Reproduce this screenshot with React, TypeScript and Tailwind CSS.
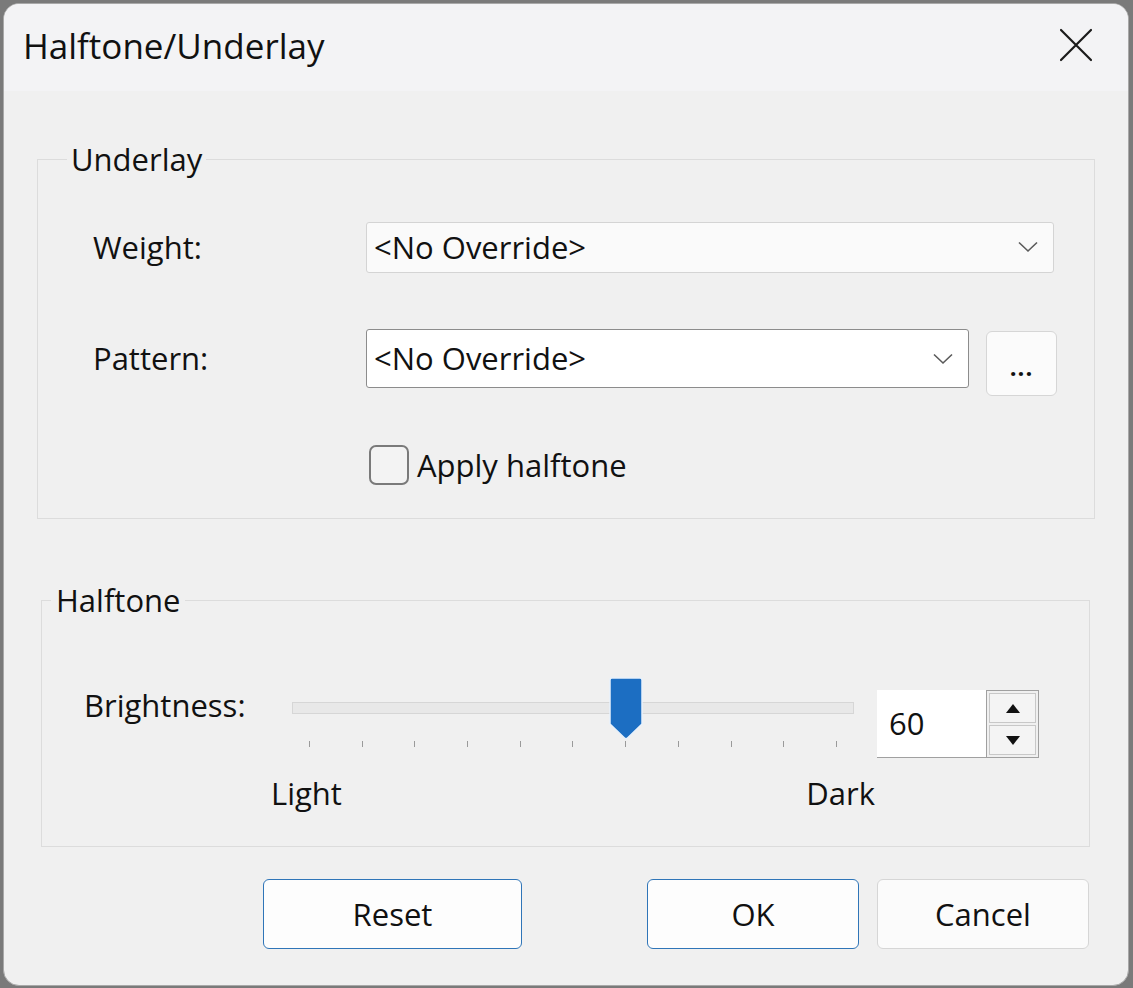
import React from 'react';

const font = { fontFamily: '"Open Sans", "Noto Sans", sans-serif' };

function Chevron() {
    return (
        <svg width="20" height="12" viewBox="0 0 20 12" className="shrink-0">
            <path d="M1 1.5 L10 10 L19 1.5" fill="none" stroke="#5a5a5a" strokeWidth="1.6" />
        </svg>
    );
}

function Combo({ width, height, focused }: { width: number; height: number; focused?: boolean }) {
    return (
        <div
            className={
                focused
                    ? 'flex items-center justify-between pl-[7px] pr-[15px] rounded-[3px] bg-white border border-[#8c8c8c]'
                    : 'flex items-center justify-between pl-[7px] pr-[15px] rounded-[3px] bg-[#fafafa] border border-[#d4d4d4]'
            }
            style={{ width, height }}
        >
            <span className="text-[31px] leading-none text-[#111]">&lt;No Override&gt;</span>
            <Chevron />
        </div>
    );
}

export default function App() {
    const ticks = Array.from({ length: 11 });
    return (
        <div className="w-[1133px] h-[988px] bg-[#7a7a7a] p-[3px] overflow-hidden" style={font}>
            <div className="w-[1126px] h-[983px] rounded-[16px] border border-[#a8a8a8] bg-[#f0f0f0] overflow-hidden flex flex-col text-[#111]">
                {/* title bar */}
                <div className="h-[87px] shrink-0 bg-[#f3f3f5] flex items-center justify-between pl-[19px] pr-[35px]">
                    <span className="text-[35px] leading-none -mt-[4px]">Halftone/Underlay</span>
                    <svg width="34" height="34" viewBox="0 0 34 34" className="-mt-[6px]">
                        <path d="M2 2 L32 32 M32 2 L2 32" stroke="#1a1a1a" strokeWidth="2.2" strokeLinecap="round" />
                    </svg>
                </div>

                {/* Underlay group */}
                <fieldset className="ml-[33px] mt-[50px] w-[1058px] h-[378px] border border-[#dcdcdc] px-0">
                    <legend className="ml-[29px] px-[4px] text-[31px] leading-[36px]">Underlay</legend>
                    <div className="flex items-center mt-[45px] h-[50px]">
                        <span className="w-[328px] pl-[55px] text-[31px]">Weight:</span>
                        <Combo width={688} height={51} />
                    </div>
                    <div className="flex items-start mt-[57px] h-[66px]">
                        <span className="w-[328px] pl-[55px] text-[31px] leading-[58px]">Pattern:</span>
                        <Combo width={603} height={59} focused />
                        <div className="ml-[17px] mt-[2px] w-[71px] h-[65px] rounded-[6px] bg-[#fbfbfb] border border-[#d6d6d6] flex items-end justify-center pb-[16px]">
                            <span className="text-[24px] leading-none font-bold tracking-[1px]">...</span>
                        </div>
                    </div>
                    <div className="flex items-center ml-[331px] mt-[50px] h-[40px]">
                        <div className="w-[40px] h-[40px] rounded-[7px] border-2 border-[#7a7a7a] bg-[#f3f3f3]" />
                        <span className="ml-[8px] text-[31px] leading-none">Apply halftone</span>
                    </div>
                </fieldset>

                {/* Halftone group */}
                <fieldset className="ml-[37px] mt-[63px] w-[1049px] h-[265px] border border-[#dcdcdc] px-0">
                    <legend className="ml-[9px] px-[5px] text-[31px] leading-[36px]">Halftone</legend>
                    <div className="flex items-start mt-[62px]">
                        <span className="w-[250px] pl-[42px] text-[31px] leading-[36px] mt-[7px]">Brightness:</span>
                        <div className="w-[585px] flex flex-col">
                            <div className="relative h-[60px]">
                                <div className="absolute left-0 top-[22px] w-[562px] h-[12px] bg-[#e8e8e8] border border-[#d6d6d6]" />
                                <svg className="absolute left-[316px] -top-[3px]" width="36" height="64" viewBox="0 0 36 64">
                                    <path d="M2 3 Q2 1 4 1 L32 1 Q34 1 34 3 L34 47 L19.5 61 Q18 62.5 16.5 61 L2 47 Z" fill="#1c6ec2" stroke="#e8f1fb" strokeWidth="1.5" />
                                </svg>
                            </div>
                            <div className="flex justify-between w-[528px] ml-[17px] mt-[1px]">
                                {ticks.map((_, i) => (
                                    <div key={i} className="w-px h-[6px] bg-[#9a9a9a]" />
                                ))}
                            </div>
                            <div className="flex justify-between w-[604px] -ml-[21px] mt-[31px] text-[31px] leading-none">
                                <span>Light</span>
                                <span>Dark</span>
                            </div>
                        </div>
                        <div className="flex mt-[10px]">
                            <div className="w-[109px] h-[68px] bg-white border-b border-[#a0a0a0] flex items-center pl-[12px] text-[31px]">60</div>
                            <div className="w-[53px] h-[68px] border border-[#a0a0a0] bg-[#f0f0f0] flex flex-col gap-[2px] p-[2px]">
                                <div className="flex-1 border border-[#c8c8c8] bg-[#f4f4f4] flex items-center justify-center">
                                    <svg width="14" height="9" viewBox="0 0 14 9"><path d="M7 0 L14 9 L0 9 Z" fill="#111" /></svg>
                                </div>
                                <div className="flex-1 border border-[#c8c8c8] bg-[#f4f4f4] flex items-center justify-center">
                                    <svg width="14" height="9" viewBox="0 0 14 9"><path d="M0 0 L14 0 L7 9 Z" fill="#111" /></svg>
                                </div>
                            </div>
                        </div>
                    </div>
                </fieldset>

                {/* buttons */}
                <div className="flex mt-[32px] h-[70px]">
                    <button className="ml-[259px] w-[259px] h-[70px] rounded-[6px] border border-[#2f75b8] bg-[#fdfdfd] text-[31px]">Reset</button>
                    <button className="ml-[125px] w-[212px] h-[70px] rounded-[6px] border border-[#2f75b8] bg-[#fdfdfd] text-[31px]">OK</button>
                    <button className="ml-[18px] w-[212px] h-[70px] rounded-[6px] border border-[#d6d6d6] bg-[#fbfbfb] text-[31px]">Cancel</button>
                </div>
            </div>
        </div>
    );
}
